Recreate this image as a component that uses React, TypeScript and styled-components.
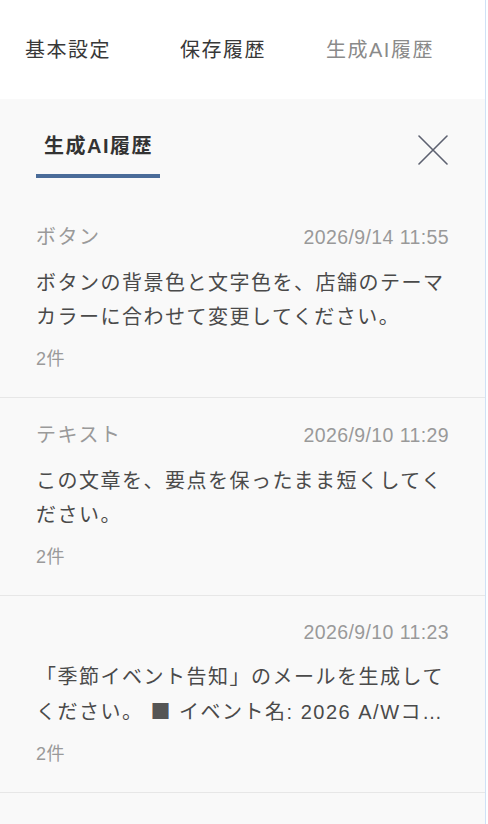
import React from 'react'
import styled, { createGlobalStyle } from 'styled-components'

const GlobalStyle = createGlobalStyle`
  html, body {
    margin: 0;
    padding: 0;
    background: #ffffff;
  }
  body {
    font-family: 'Liberation Sans', 'Noto Sans CJK JP', sans-serif;
    -webkit-font-smoothing: antialiased;
  }
  * {
    box-sizing: border-box;
  }
`

const Page = styled.div`
  width: 486px;
  min-height: 824px;
  border-right: 1px solid #cfe1f7;
  background: #f9f9f9;
  display: flex;
  flex-direction: column;
  letter-spacing: 1.5px;
`

const TabBar = styled.nav`
  height: 99px;
  background: #ffffff;
  display: grid;
  grid-template-columns: 155px 146px auto;
  align-items: center;
  padding-left: 25px;
`

const Tab = styled.div<{ $muted?: boolean }>`
  font-size: 20px;
  line-height: 28px;
  color: ${p => (p.$muted ? '#8a8a8a' : '#383838')};
  white-space: nowrap;
`

const Panel = styled.section`
  flex: 1;
  display: flex;
  flex-direction: column;
`

const PanelHeader = styled.div`
  height: 101px;
  display: flex;
  justify-content: space-between;
  align-items: center;
  padding: 0 37px 0 36px;
`

const PanelTab = styled.div`
  align-self: flex-start;
  margin-top: 32px;
  padding: 0 7px 13px 8px;
  font-size: 20px;
  line-height: 30px;
  font-weight: 700;
  color: #333333;
  border-bottom: 4px solid #4a6c99;
`

const CloseButton = styled.button`
  background: transparent;
  border: none;
  padding: 0;
  width: 30px;
  height: 30px;
  display: flex;
  align-items: center;
  justify-content: center;
  cursor: pointer;
`

const List = styled.div`
  display: flex;
  flex-direction: column;
`

const Item = styled.div`
  padding: 23px 36px 26px;
  border-bottom: 1px solid #e7e7e7;
`

const MetaRow = styled.div`
  display: flex;
  justify-content: space-between;
  align-items: center;
`

const Category = styled.span`
  font-size: 20px;
  line-height: 28px;
  color: #9a9a9a;
`

const Stamp = styled.span`
  margin-left: auto;
  font-size: 19.5px;
  line-height: 26px;
  letter-spacing: 0.4px;
  color: #999999;
`

const Prompt = styled.p`
  margin: 15px 0 0;
  font-size: 20px;
  line-height: 34px;
  color: #4a4a4a;
  display: -webkit-box;
  -webkit-line-clamp: 2;
  -webkit-box-orient: vertical;
  overflow: hidden;
  word-break: break-all;
`

const Mark = styled.span`
  font-family: 'Noto Sans CJK JP', sans-serif;
  color: #555555;
`

const Count = styled.div`
  margin-top: 13px;
  font-size: 18px;
  line-height: 24px;
  letter-spacing: 0.5px;
  color: #9a9a9a;
`

const CloseIcon = () => (
  <svg width="30" height="30" viewBox="0 0 30 30" fill="none">
    <path d="M1 1 L29 29 M29 1 L1 29" stroke="#5d6170" strokeWidth="1.6" strokeLinecap="round" />
  </svg>
)

const history = [
  {
    category: 'ボタン',
    date: '2026/9/14 11:55',
    prompt: 'ボタンの背景色と文字色を、店舗のテーマカラーに合わせて変更してください。',
    count: 2
  },
  {
    category: 'テキスト',
    date: '2026/9/10 11:29',
    prompt: 'この文章を、要点を保ったまま短くしてください。',
    count: 2
  },
  {
    category: '',
    date: '2026/9/10 11:23',
    prompt:
      '「季節イベント告知」のメールを生成してください。 ■ イベント名: 2026 A/Wコレクション発売記念フェア ■ 期間: 9月20日〜10月5日',
    count: 2
  }
]

// ■ marks come from the CJK font so they render as the larger square
const renderPrompt = (text: string) =>
  text.split('■').map((part, i) => (
    <React.Fragment key={i}>
      {i > 0 && <Mark>■</Mark>}
      {part}
    </React.Fragment>
  ))

const App: React.FC = () => {
  return (
    <>
      <GlobalStyle />
      <Page>
        <TabBar>
          <Tab>基本設定</Tab>
          <Tab>保存履歴</Tab>
          <Tab $muted>生成AI履歴</Tab>
        </TabBar>

        <Panel>
          <PanelHeader>
            <PanelTab>生成AI履歴</PanelTab>
            <CloseButton aria-label="閉じる">
              <CloseIcon />
            </CloseButton>
          </PanelHeader>

          <List>
            {history.map((h, i) => (
              <Item key={i}>
                <MetaRow>
                  {h.category && <Category>{h.category}</Category>}
                  <Stamp>{h.date}</Stamp>
                </MetaRow>
                <Prompt>{renderPrompt(h.prompt)}</Prompt>
                <Count>{h.count}件</Count>
              </Item>
            ))}
          </List>
        </Panel>
      </Page>
    </>
  )
}

export default App
